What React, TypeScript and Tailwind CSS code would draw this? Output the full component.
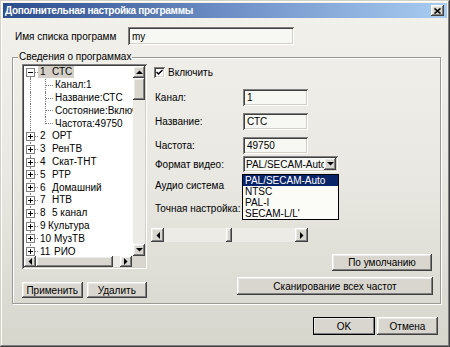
import React from "react";

const raised =
  "bg-[#d8d6ce] shadow-[inset_-1px_-1px_0_#404040,inset_1px_1px_0_#ffffff,inset_-2px_-2px_0_#808080,inset_2px_2px_0_#ecebe5]";
const sunken =
  "shadow-[inset_1px_1px_0_#808080,inset_-1px_-1px_0_#ffffff,inset_2px_2px_0_#404040,inset_-2px_-2px_0_#d4d0c8]";

type Dir = "up" | "down" | "left" | "right";

function Arrow({ dir }: { dir: Dir }) {
  const vertical = dir === "up" || dir === "down";
  const pts: Record<Dir, string> = {
    up: "0,4 3.5,0.5 7,4",
    down: "0,0 7,0 3.5,3.5",
    left: "4,0 4,7 0.5,3.5",
    right: "0,0 0,7 3.5,3.5",
  };
  return (
    <svg width={vertical ? 7 : 4} height={vertical ? 4 : 7} viewBox={vertical ? "0 0 7 4" : "0 0 4 7"}>
      <polygon points={pts[dir]} fill="#000" />
    </svg>
  );
}

function ScrollBtn({ dir, className = "" }: { dir: Dir; className?: string }) {
  return (
    <div className={`${raised} flex items-center justify-center shrink-0 ${className}`}>
      <Arrow dir={dir} />
    </div>
  );
}

function Button({ children, className = "" }: { children: React.ReactNode; className?: string }) {
  return (
    <div className={`${raised} flex items-center justify-center text-black ${className}`}>{children}</div>
  );
}

type Channel = { n: string; name: string; gap?: number; children?: string[] };

const channels: Channel[] = [
  { n: "1", name: "СТС", children: ["Канал:1", "Название:СТС", "Состояние:Включи", "Частота:49750"] },
  { n: "2", name: "ОРТ" },
  { n: "3", name: "РенТВ" },
  { n: "4", name: "Скат-ТНТ" },
  { n: "5", name: "РТР" },
  { n: "6", name: "Домашний" },
  { n: "7", name: "НТВ" },
  { n: "8", name: "5 канал" },
  { n: "9", name: "Культура", gap: 8 },
  { n: "10", name: "МузТВ", gap: 14 },
  { n: "11", name: "РИО", gap: 14 },
];

function ExpandBox({ open }: { open: boolean }) {
  return (
    <span className="absolute left-[2px] top-[2px] w-[9px] h-[9px] border border-[#808080] bg-white flex items-center justify-center">
      <span className="relative w-[5px] h-[5px]">
        <span className="absolute left-0 top-[2px] w-[5px] h-[1px] bg-black" />
        {!open && <span className="absolute left-[2px] top-0 w-[1px] h-[5px] bg-black" />}
      </span>
    </span>
  );
}

function Tree() {
  const rows: React.ReactNode[] = [];
  channels.forEach((c, i) => {
    rows.push(
      <div key={c.n} className="relative h-[12.8px] shrink-0 flex items-center whitespace-nowrap">
        <span
          className={`absolute left-[6px] bottom-0 border-l border-dotted border-[#808080] ${i === 0 ? "top-[11px]" : "top-0"}`}
        />
        <span className="absolute left-[11px] top-[6px] w-[3px] border-t border-dotted border-[#808080]" />
        <ExpandBox open={!!c.children} />
        <span className={`ml-[14px] px-[2px] flex leading-[12px] ${i === 0 ? "bg-[#d4d0c8]" : ""}`}>
          <span className="shrink-0" style={{ width: c.gap ?? 12 }}>{c.n}</span>
          <span>{c.name}</span>
        </span>
      </div>
    );
    c.children?.forEach((ch, j) => {
      const last = j === c.children!.length - 1;
      rows.push(
        <div key={c.n + ch} className="relative h-[12.8px] shrink-0 flex items-center whitespace-nowrap">
          <span className="absolute left-[6px] top-0 bottom-0 border-l border-dotted border-[#808080]" />
          <span
            className={`absolute left-[21px] top-0 border-l border-dotted border-[#808080] ${last ? "h-[7px]" : "bottom-0"}`}
          />
          <span className="absolute left-[22px] top-[6px] w-[7px] border-t border-dotted border-[#808080]" />
          <span className="ml-[31px] leading-[12px]">{ch}</span>
        </div>
      );
    });
  });

  return (
    <div className={`${sunken} bg-white w-[125px] h-[205px] p-[2px] flex flex-col`}>
      <div className="flex flex-1 min-h-0">
        <div className="flex-1 min-w-0 overflow-hidden flex flex-col">{rows}</div>
        {/* vertical scrollbar */}
        <div className="w-[12px] flex flex-col bg-[#ecebe5]">
          <ScrollBtn dir="up" className="h-[12px]" />
          <div className={`${raised} h-[22px]`} />
          <div className="flex-1" />
          <ScrollBtn dir="down" className="h-[12px]" />
        </div>
      </div>
      {/* horizontal scrollbar */}
      <div className="h-[11px] flex">
        <div className="flex-1 flex bg-[#ecebe5]">
          <ScrollBtn dir="left" className="w-[12px]" />
          <div className={`${raised} w-[77px]`} />
          <div className="flex-1" />
          <ScrollBtn dir="right" className="w-[12px]" />
        </div>
        <div className="w-[13px] bg-[#d8d6ce]" />
      </div>
    </div>
  );
}

function Field({ label, value }: { label: string; value: string }) {
  return (
    <div className="flex items-center">
      <span className="w-[88px] ml-[4px]">{label}</span>
      <div className={`${sunken} bg-[#f7f7f3] w-[65px] h-[17px] flex items-center pl-[4px]`}>{value}</div>
    </div>
  );
}

export default function App() {
  return (
    <div className="w-[450px] h-[347px] p-[3px] flex flex-col font-['Liberation_Sans',sans-serif] text-[10px] text-black bg-linear-to-b from-[#f2f1ec] via-[#e9e8e2] to-[#d6d6cd] shadow-[inset_-1px_-1px_0_#404040,inset_1px_1px_0_#d4d0c8,inset_-2px_-2px_0_#808080,inset_2px_2px_0_#ffffff]">
      {/* title bar */}
      <div className="h-[15px] shrink-0 flex items-center justify-between pl-[2px] pr-[3px] bg-linear-to-r from-[#2c4d8c] via-[#6d8ec6] to-[#a9ccf1]">
        <span className="text-white font-bold text-[10px] tracking-[-0.3px]">Дополнительная настройка программы</span>
        <div className={`${raised} w-[13px] h-[11px] flex items-center justify-center`}>
          <svg width="7" height="6" viewBox="0 0 7 6">
            <path d="M0.5 0.5 L6.5 5.5 M6.5 0.5 L0.5 5.5" stroke="#000" strokeWidth="1.6" />
          </svg>
        </div>
      </div>

      {/* list name */}
      <div className="mt-[9px] pl-[12px] flex items-center">
        <span className="w-[113px]">Имя списка программ</span>
        <div className={`${sunken} bg-[#f7f7f3] w-[166px] h-[18px] flex items-center pl-[4px]`}>my</div>
      </div>

      {/* group box */}
      <div className="relative mt-[12px] ml-[9px] w-[429px] h-[247px] shrink-0 border border-[#9a9a94] shadow-[inset_1px_1px_0_#ffffff,1px_1px_0_#ffffff]">
        <span className="absolute left-[5px] top-[-7px] px-[1px] bg-[#efeee9] leading-[12px]">Сведения о программах</span>
        <div className="flex pt-[6px] pl-[9px]">
          {/* left column */}
          <div className="w-[125px] flex flex-col">
            <Tree />
            <div className="mt-[13px] flex gap-[4px]">
              <Button className="w-[61px] h-[16px]">Применить</Button>
              <Button className="w-[61px] h-[16px]">Удалить</Button>
            </div>
          </div>

          {/* right column */}
          <div className="ml-[4px] w-[289px] flex flex-col">
            <div className="mt-[3px] ml-[3px] flex items-center h-[11px]">
              <div className={`${sunken} bg-white w-[11px] h-[11px] flex items-center justify-center`}>
                <svg width="7" height="7" viewBox="0 0 7 7">
                  <path d="M0.5 3 L2.5 5 L6.5 1" stroke="#000" strokeWidth="1.5" fill="none" />
                </svg>
              </div>
              <span className="ml-[3px]">Включить</span>
            </div>

            <div className="mt-[11px] flex flex-col gap-[7px]">
              <Field label="Канал:" value="1" />
              <Field label="Название:" value="СТС" />
              <Field label="Частота:" value="49750" />
            </div>

            <div className="mt-[2px] flex items-center">
              <span className="w-[88px] ml-[4px]">Формат видео:</span>
              <div className={`${sunken} bg-[#f7f7f3] relative w-[95px] h-[16px] flex items-center pl-[3px] pr-[2px]`}>
                <span className="flex-1 whitespace-nowrap overflow-hidden">PAL/SECAM-Auto</span>
                <ScrollBtn dir="down" className="w-[12px] h-[12px]" />
                {/* open list */}
                <div className="absolute left-[-1px] top-[18px] w-[97px] border border-black bg-[#fbfbf8] flex flex-col z-10">
                  <span className="h-[11px] leading-[11px] pl-[2px] bg-[#0a246a] text-white">PAL/SECAM-Auto</span>
                  <span className="h-[11px] leading-[11px] pl-[2px]">NTSC</span>
                  <span className="h-[11px] leading-[11px] pl-[2px]">PAL-I</span>
                  <span className="h-[11px] leading-[11px] pl-[2px]">SECAM-L/L'</span>
                </div>
              </div>
            </div>

            <div className="mt-[5px] h-[16px] flex items-center ml-[4px]">Аудио система</div>
            <div className="mt-[7px] h-[16px] flex items-center ml-[4px]">Точная настройка:</div>

            {/* fine tune slider */}
            <div className="mt-[12px] w-[157px] h-[14px] flex bg-[#ecebe5]">
              <ScrollBtn dir="left" className="w-[13px]" />
              <div className="w-[62px]" />
              <div className={`${raised} w-[6px]`} />
              <div className="flex-1" />
              <ScrollBtn dir="right" className="w-[13px]" />
            </div>

            <Button className="mt-[12px] ml-[181px] w-[100px] h-[17px]">По умолчанию</Button>
            <Button className="mt-[6px] ml-[86px] w-[196px] h-[18px]">Сканирование всех частот</Button>
          </div>
        </div>
      </div>

      {/* dialog buttons */}
      <div className="mt-[13px] pr-[9px] flex justify-end gap-[2px]">
        <Button className="w-[62px] h-[18px] outline outline-1 outline-black -outline-offset-1">OK</Button>
        <Button className="w-[61px] h-[18px]">Отмена</Button>
      </div>
    </div>
  );
}
